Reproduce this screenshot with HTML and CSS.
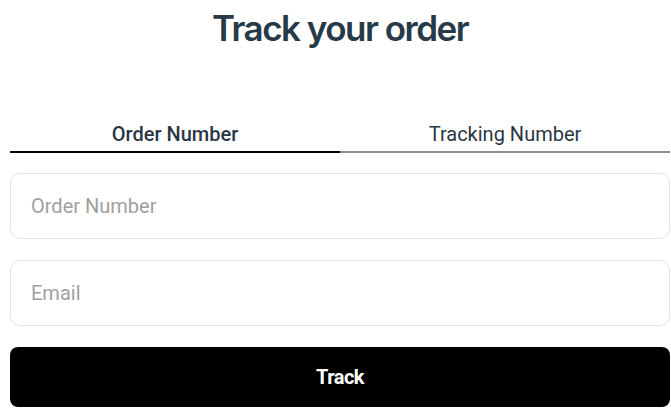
FILE: index.html
```html
<!DOCTYPE html>
<html lang="en">
<head>
  <meta charset="UTF-8" />
  <meta name="viewport" content="width=device-width, initial-scale=1.0" />
  <title>Track your order</title>
  <link rel="stylesheet" href="styles.css">
</head>
<body>
  <div class="track-page">
    <h1 class="track-title">Track your order</h1>
    <div class="tabs">
      <button class="tab active">Order Number</button>
      <button class="tab">Tracking Number</button>
    </div>
    <form class="track-form">
      <input class="field" type="text" placeholder="Order Number">
      <input class="field" type="email" placeholder="Email">
      <button class="track-button" type="button">Track</button>
    </form>
  </div>
</body>
</html>
```

FILE: styles.css
```css
body { margin: 0; background: #fff; font-family: Roboto, "Liberation Sans", sans-serif; color: #263a48; }
.track-page { width: 660px; margin-left: 10px; }
.track-title { margin: 0; padding-top: 8px; text-align: center; font-family: Inter, Roboto, sans-serif; font-size: 35px; font-weight: 600; letter-spacing: -1.5px; line-height: 40px; color: #263a48; }
.tabs { display: flex; margin-top: 74px; }
.tab { flex: 1; background: none; border: none; border-bottom: 2px solid #8e9099; padding: 0 0 5px; font-family: inherit; font-size: 20px; color: #2a3644; cursor: pointer; line-height: 24px; }
.tab.active { border-bottom-color: #000; font-weight: 500; }
.track-form { display: flex; flex-direction: column; gap: 21px; margin-top: 20px; }
.field { height: 66px; box-sizing: border-box; border: 1px solid #e4e4e4; border-radius: 10px; padding: 0 20px; font-family: inherit; font-size: 20px; color: #222; outline: none; }
.field::placeholder { color: #a0a0a0; }
.track-button { height: 60px; border: none; border-radius: 8px; background: #000; color: #fff; font-family: inherit; font-size: 20px; font-weight: 700; letter-spacing: -0.5px; cursor: pointer; }
```
